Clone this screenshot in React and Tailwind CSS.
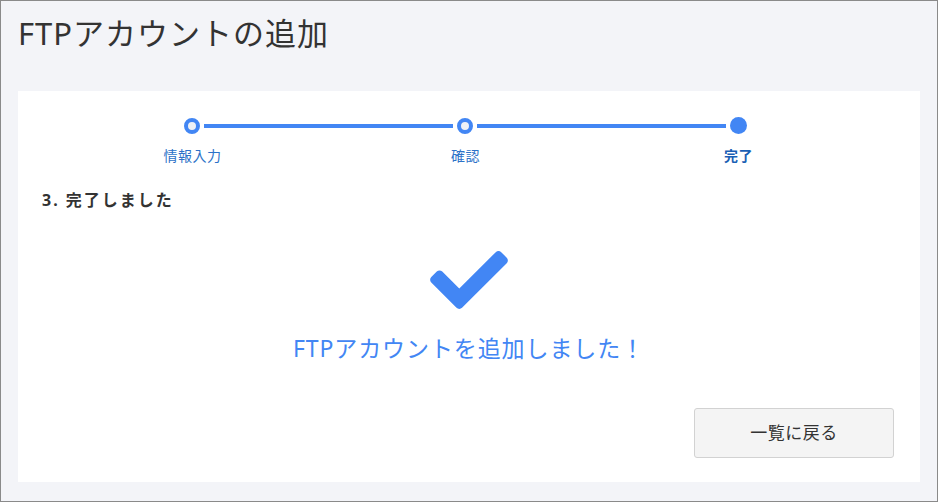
export default function App() {
  const steps = [
    { label: "情報入力", done: true },
    { label: "確認", done: true },
    { label: "完了", current: true },
  ];

  return (
    <div
      className="w-[938px] h-[502px] bg-[#f3f4f8] border border-[#8a8a8a] overflow-hidden text-[#333]"
      style={{ fontFamily: '"Noto Sans", "Noto Sans CJK JP", sans-serif' }}
    >
      <h1 className="px-[17px] pt-[12px] text-[31px] leading-[40px] tracking-[1px] font-normal text-[#333]">
        FTPアカウントの追加
      </h1>

      <div className="mx-[17px] mt-[38px] bg-white px-[24px] pt-[26px] pb-[24px]">
        {/* stepper */}
        <div className="ml-[14px] w-[819px]">
          <div className="flex items-center px-[128px]">
            <span className="w-4 h-4 rounded-full border-[4px] border-[#4286f4] bg-[#eef1f6] shrink-0" />
            <span className="flex-1 h-[4px] mx-[4px] bg-[#4286f4]" />
            <span className="w-4 h-4 rounded-full border-[4px] border-[#4286f4] bg-[#eef1f6] shrink-0" />
            <span className="flex-1 h-[4px] mx-[4px] bg-[#4286f4]" />
            <span className="w-[17px] h-[17px] rounded-full bg-[#4286f4] shrink-0" />
          </div>
          <div className="grid grid-cols-3 mt-[12px]">
            {steps.map((s) => (
              <div
                key={s.label}
                className={
                  s.current
                    ? "text-center text-[14px] leading-[20px] tracking-[0.5px] font-bold text-[#1b5fb5]"
                    : "text-center text-[14px] leading-[20px] tracking-[0.5px] text-[#2d72c8]"
                }
              >
                {s.label}
              </div>
            ))}
          </div>
        </div>

        <h2 className="mt-[23px] text-[16px] leading-[22px] tracking-[2px] font-bold text-[#333]">
          3. 完了しました
        </h2>

        <div className="flex flex-col items-center">
          <svg
            className="mt-[40px]"
            width="78"
            height="58"
            viewBox="0 65 512 382"
            fill="#4286f4"
          >
            <path d="M173.898 439.404l-166.4-166.4c-9.997-9.997-9.997-26.206 0-36.204l36.203-36.204c9.997-9.998 26.207-9.998 36.204 0L192 312.69 432.095 72.596c9.997-9.997 26.207-9.997 36.204 0l36.203 36.204c9.997 9.997 9.997 26.206 0 36.204l-294.4 294.401c-9.998 9.997-26.207 9.997-36.204-.001z" />
          </svg>
          <p className="mt-[24px] text-[23px] leading-[30px] tracking-[0.9px] text-[#4286f4]">
            FTPアカウントを追加しました！
          </p>
        </div>

        <div className="flex justify-end mt-[45px] pr-[2px]">
          <button className="w-[200px] h-[50px] bg-[#f4f4f4] border border-[#d2d2d2] rounded-[3px] text-[17px] tracking-[0.5px] text-[#333]">
            一覧に戻る
          </button>
        </div>
      </div>
    </div>
  );
}
